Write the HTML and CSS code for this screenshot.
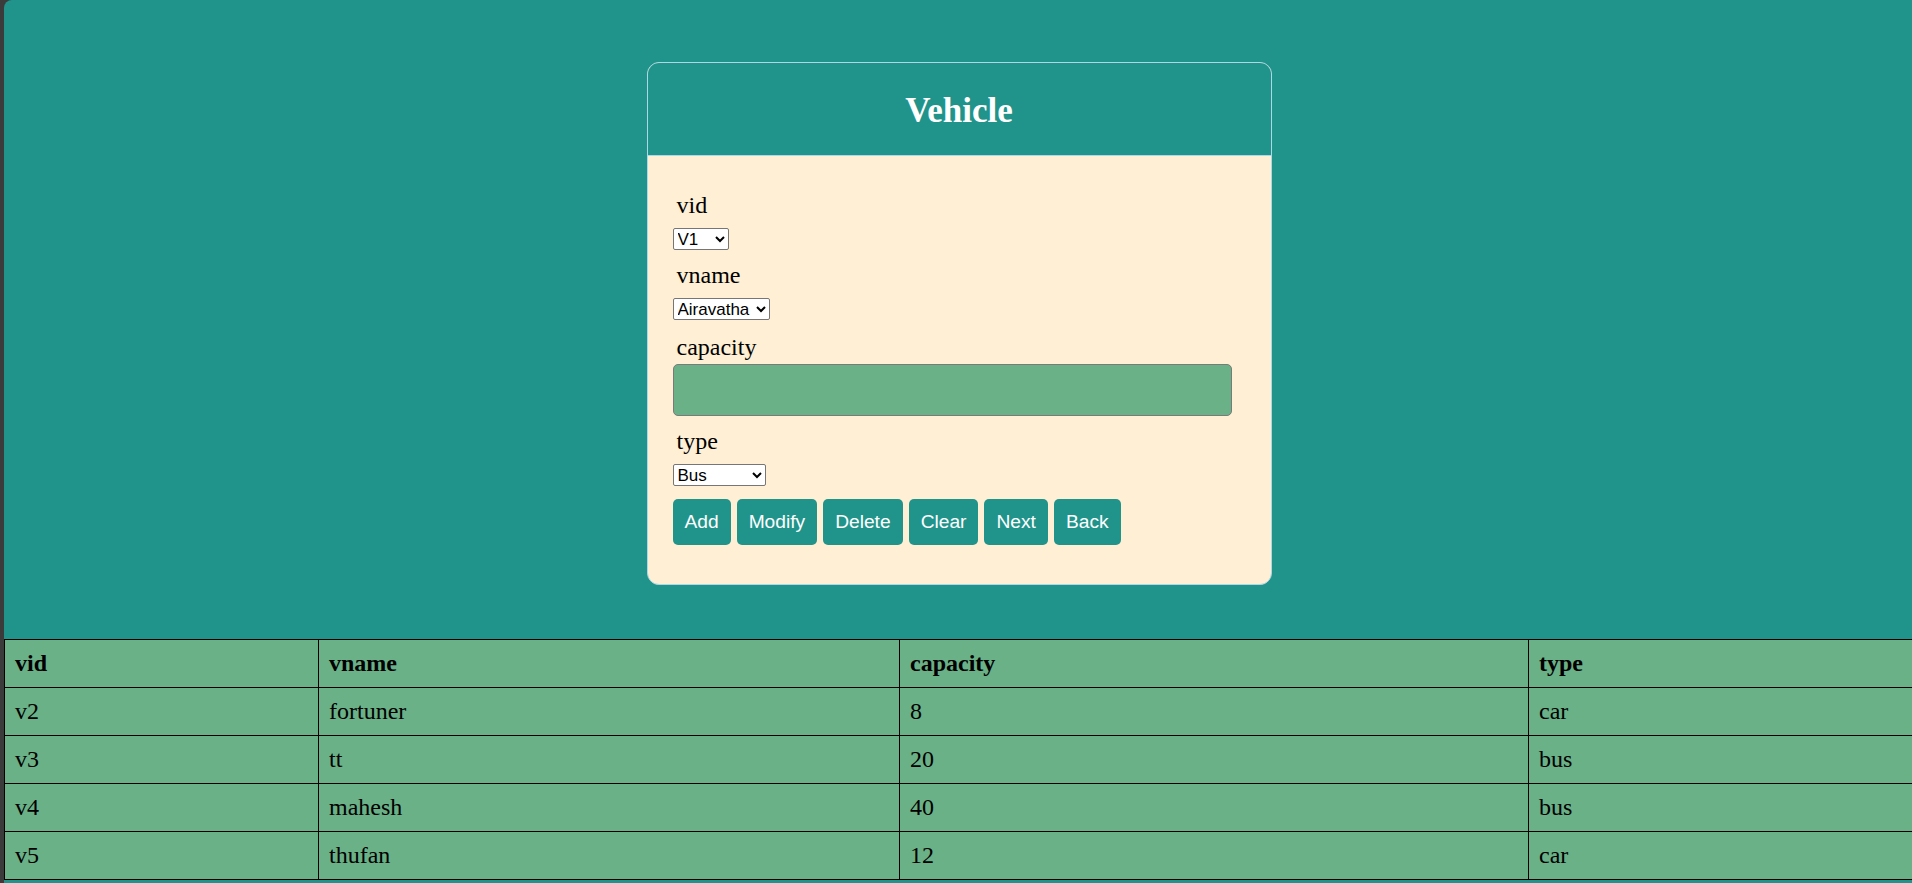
FILE: index.html
```html
<!DOCTYPE html>
<html lang="en">
<head>
<meta charset="utf-8">
<title>Vehicle</title>
<link rel="stylesheet" href="styles.css">
</head>
<body>
<div class="page">
  <div class="card">
    <div class="card-head"><h1 class="title">Vehicle</h1></div>
    <form class="card-body">
      <div class="field">
        <label class="label" for="vid">vid</label>
        <select id="vid" class="select sel-vid"><option>V1</option><option>V2</option><option>V3</option><option>V4</option><option>V5</option></select>
      </div>
      <div class="field field-wide">
        <label class="label" for="vname">vname</label>
        <select id="vname" class="select sel-vname"><option>Airavatha</option><option>fortuner</option><option>tt</option><option>mahesh</option><option>thufan</option></select>
      </div>
      <div class="field field-input">
        <label class="label label-tight" for="capacity">capacity</label>
        <input id="capacity" class="text-input" type="text">
      </div>
      <div class="field field-last">
        <label class="label" for="type">type</label>
        <select id="type" class="select sel-type"><option>Bus</option><option>Car</option><option>Truck</option></select>
      </div>
      <div class="actions">
        <button type="button" class="btn">Add</button>
        <button type="button" class="btn">Modify</button>
        <button type="button" class="btn">Delete</button>
        <button type="button" class="btn">Clear</button>
        <button type="button" class="btn">Next</button>
        <button type="button" class="btn">Back</button>
      </div>
    </form>
  </div>

  <table class="grid">
    <colgroup>
      <col class="c-vid"><col class="c-vname"><col class="c-cap"><col class="c-type">
    </colgroup>
    <thead>
      <tr><th>vid</th><th>vname</th><th>capacity</th><th>type</th></tr>
    </thead>
    <tbody>
      <tr><td>v2</td><td>fortuner</td><td>8</td><td>car</td></tr>
      <tr><td>v3</td><td>tt</td><td>20</td><td>bus</td></tr>
      <tr><td>v4</td><td>mahesh</td><td>40</td><td>bus</td></tr>
      <tr><td>v5</td><td>thufan</td><td>12</td><td>car</td></tr>
    </tbody>
  </table>
</div>
</body>
</html>
```

FILE: styles.css
```css
html, body {
  margin: 0;
  padding: 0;
}

body {
  background: #3b3b3b;
  font-family: "Liberation Serif", "Times New Roman", serif;
  overflow: hidden;
}

.page {
  margin-left: 4px;
  height: 883px;
  background: #20948b;
  border-top-left-radius: 8px;
  overflow: hidden;
  display: flex;
  flex-direction: column;
}

.card {
  box-sizing: border-box;
  width: 625px;
  margin: 62px auto 0;
  position: relative;
  left: 1px;
  border: 1px solid #add8e6;
  border-radius: 12px;
  background: #ffefd5;
  overflow: hidden;
}

.card-head {
  box-sizing: border-box;
  height: 93px;
  padding-top: 3px;
  background: #20948b;
  border-bottom: 1px solid #add8e6;
  display: flex;
  align-items: center;
  justify-content: center;
}

.title {
  margin: 0;
  color: #ffffff;
  font-size: 35px;
  font-weight: bold;
  line-height: 40px;
}

.card-body {
  display: flex;
  flex-direction: column;
  align-items: flex-start;
  padding: 36px 25px 39px;
  margin: 0;
}

.field {
  display: flex;
  flex-direction: column;
  align-items: flex-start;
  margin-bottom: 12px;
}

.field-wide {
  margin-bottom: 14px;
}

.field-input {
  margin-bottom: 12px;
}

.field-last {
  margin-bottom: 13px;
}

.label {
  font-size: 24px;
  line-height: 27px;
  color: #000;
  padding-left: 4px;
  margin-bottom: 9px;
}

.label-tight {
  margin-bottom: 3px;
}

.select {
  font-family: "Liberation Sans", Arial, sans-serif;
  font-size: 17px;
  height: 22px;
  padding: 0;
  margin: 0;
  background: #ffffff;
  color: #000;
  border: 1px solid #767676;
  border-radius: 2px;
}

.sel-vid { width: 56px; }
.sel-vname { width: 97px; }
.sel-type { width: 93px; }

.text-input {
  box-sizing: border-box;
  width: 559px;
  height: 52px;
  margin: 0;
  background: #6ab187;
  border: 1px solid #7a7a7a;
  border-radius: 5px;
}

.actions {
  display: flex;
  gap: 6px;
}

.btn {
  font-family: "Liberation Sans", Arial, sans-serif;
  font-size: 19.2px;
  line-height: 22px;
  padding: 12px 12px;
  margin: 0;
  color: #ffffff;
  background: #20948b;
  border: none;
  border-radius: 5px;
}

.grid {
  margin-top: 54px;
  width: 1920px;
  flex-shrink: 0;
  table-layout: fixed;
  border-collapse: collapse;
  background: #6ab187;
  font-size: 24px;
  color: #000;
}

.c-vid { width: 314px; }
.c-vname { width: 581px; }
.c-cap { width: 629px; }
.c-type { width: 396px; }

.grid th,
.grid td {
  border: 1px solid #000;
  padding: 10px;
  line-height: 27px;
  text-align: left;
}

.grid th {
  font-weight: bold;
}
```
